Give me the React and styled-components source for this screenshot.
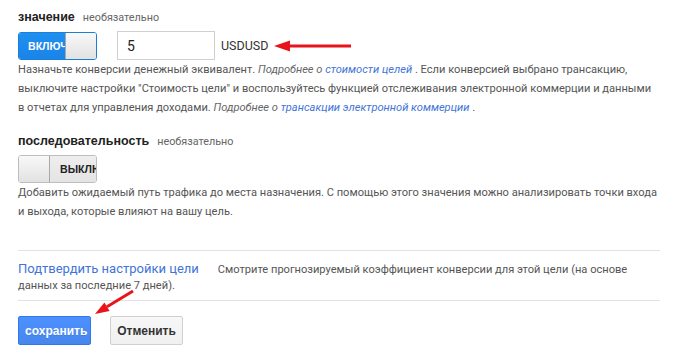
import React from 'react';
import styled, { createGlobalStyle } from 'styled-components';

const GlobalStyle = createGlobalStyle`
  html, body {
    margin: 0;
    padding: 0;
    background: #fff;
  }
  body {
    font-family: Roboto, "Liberation Sans", Arial, sans-serif;
    color: #555;
  }
`;

const Page = styled.div`
  width: 642px;
  padding: 10px 0 0 18px;
`;

const Section = styled.div`
  margin-bottom: ${(p) => p.gap || 0}px;
`;

const FieldLabel = styled.div`
  display: flex;
  align-items: baseline;
  height: 21px;
`;

const LabelName = styled.span`
  font-family: "Liberation Sans", Arial, sans-serif;
  font-weight: bold;
  font-size: 12.5px;
  color: #222;
`;

const Optional = styled.span`
  margin-left: 8px;
  font-size: 10.8px;
  color: #666;
`;

const ControlRow = styled.div`
  display: flex;
  align-items: center;
`;

const Toggle = styled.div`
  display: flex;
  width: 79px;
  height: 28px;
  border: 1px solid ${(p) => (p.on ? '#1a7fd9' : '#bdbdbd')};
  border-radius: 3px;
  overflow: hidden;
  box-sizing: border-box;
  flex-direction: ${(p) => (p.on ? 'row' : 'row-reverse')};
`;

const ToggleText = styled.span`
  flex: 1;
  min-width: 0;
  overflow: hidden;
  white-space: nowrap;
  font-family: "Liberation Sans", Arial, sans-serif;
  font-weight: bold;
  font-size: 10.6px;
  line-height: 26px;
  padding-left: ${(p) => (p.on ? 9 : 10)}px;
  color: ${(p) => (p.on ? '#fff' : '#222')};
  background: ${(p) =>
    p.on ? 'linear-gradient(#1e90f0, #1a84e8)' : 'linear-gradient(#eeeeee, #e4e4e4)'};
`;

const Knob = styled.span`
  width: 30px;
  flex: none;
  background: linear-gradient(#f8f8f8, #e2e2e2);
  border-${(p) => (p.on ? 'left' : 'right')}: 1px solid #a8a8a8;
`;

const ValueInput = styled.input`
  margin-left: 20px;
  width: 98px;
  height: 29px;
  box-sizing: border-box;
  border: 1px solid #d0d0d0;
  padding: 0 9px;
  font-family: Roboto, Arial, sans-serif;
  font-size: 14px;
  color: #222;
  outline: none;
`;

const Currency = styled.span`
  margin-left: 6px;
  font-family: Roboto, Arial, sans-serif;
  font-size: 12.5px;
  color: #333;
`;

const Help = styled.p`
  margin: 0;
  font-size: 11.1px;
  line-height: 19px;
  color: #555;
`;

const More = styled.i`
  color: #666;
`;

const Link = styled.a`
  color: #3f74d8;
  font-style: ${(p) => (p.italic ? 'italic' : 'normal')};
  font-size: ${(p) => p.size || 11.1}px;
  text-decoration: none;
`;

const Divider = styled.hr`
  margin: 0;
  border: 0;
  border-top: 1px solid #e2e2e2;
`;

const Verify = styled.div`
  padding: 10px 0 6px;
  font-size: 11.1px;
  line-height: 16px;
  color: #555;
`;

const VerifyLink = styled(Link)`
  margin-right: 19px;
`;

const Actions = styled.div`
  position: relative;
  display: flex;
  gap: 19px;
  padding-top: 15px;
`;

const Button = styled.button`
  width: 73px;
  height: 29px;
  box-sizing: border-box;
  border-radius: 2px;
  font-family: "Liberation Sans", Arial, sans-serif;
  font-weight: bold;
  font-size: 12px;
  cursor: pointer;
  border: 1px solid ${(p) => (p.primary ? '#3079ed' : '#d0d0d0')};
  color: ${(p) => (p.primary ? '#fff' : '#333')};
  background: ${(p) =>
    p.primary ? 'linear-gradient(#4d90fe, #4787ed)' : 'linear-gradient(#f7f7f7, #f0f0f0)'};
  text-shadow: ${(p) => (p.primary ? '0 1px rgba(0,0,0,0.1)' : 'none')};
`;

const ArrowMark = styled.svg`
  display: block;
  flex: none;
  margin-left: ${(p) => p.offset || 0}px;
`;

const Overlay = styled.svg`
  position: absolute;
  left: 72px;
  top: -14px;
  pointer-events: none;
`;

function Switch({ on, label }) {
  return (
    <Toggle on={on}>
      <ToggleText on={on}>{label}</ToggleText>
      <Knob on={on} />
    </Toggle>
  );
}

export default function App() {
  return (
    <>
      <GlobalStyle />
      <Page>
        <Section gap={17}>
          <FieldLabel>
            <LabelName>значение</LabelName>
            <Optional>необязательно</Optional>
          </FieldLabel>
          <ControlRow>
            <Switch on label="ВКЛЮЧЕНО" />
            <ValueInput defaultValue="5" />
            <Currency>USDUSD</Currency>
            <ArrowMark offset={6} width="78" height="14" viewBox="0 0 78 14">
              <line x1="12" y1="7" x2="77" y2="7" stroke="#e8141b" strokeWidth="3" />
              <polygon points="0,7 16,1.5 16,12.5" fill="#e8141b" />
            </ArrowMark>
          </ControlRow>
          <Help>
            Назначьте конверсии денежный эквивалент. <More>Подробнее о </More>
            <Link italic href="#">стоимости целей</Link> . Если конверсией выбрано трансакцию,
            выключите настройки "Стоимость цели" и воспользуйтесь функцией отслеживания
            электронной коммерции и данными в отчетах для управления доходами.{' '}
            <More>Подробнее о </More>
            <Link italic href="#">трансакции электронной коммерции</Link> .
          </Help>
        </Section>

        <Section gap={29}>
          <FieldLabel>
            <LabelName>последовательность</LabelName>
            <Optional>необязательно</Optional>
          </FieldLabel>
          <ControlRow>
            <Switch label="ВЫКЛЮЧЕНО" />
          </ControlRow>
          <Help>
            Добавить ожидаемый путь трафика до места назначения. С помощью этого значения можно
            анализировать точки входа и выхода, которые влияют на вашу цель.
          </Help>
        </Section>

        <Divider />
        <Verify>
          <VerifyLink size={13} href="#">Подтвердить настройки цели</VerifyLink>
          Смотрите прогнозируемый коэффициент конверсии для этой цели (на основе данных за
          последние 7 дней).
        </Verify>
        <Divider />

        <Actions>
          <Button primary>сохранить</Button>
          <Button>Отменить</Button>
          <Overlay width="50" height="32" viewBox="0 0 50 32">
            <line x1="43" y1="4" x2="17" y2="19.75" stroke="#e8141b" strokeWidth="3" />
            <polygon points="5,27 19.6,24 14.4,15.5" fill="#e8141b" />
          </Overlay>
        </Actions>
      </Page>
    </>
  );
}
